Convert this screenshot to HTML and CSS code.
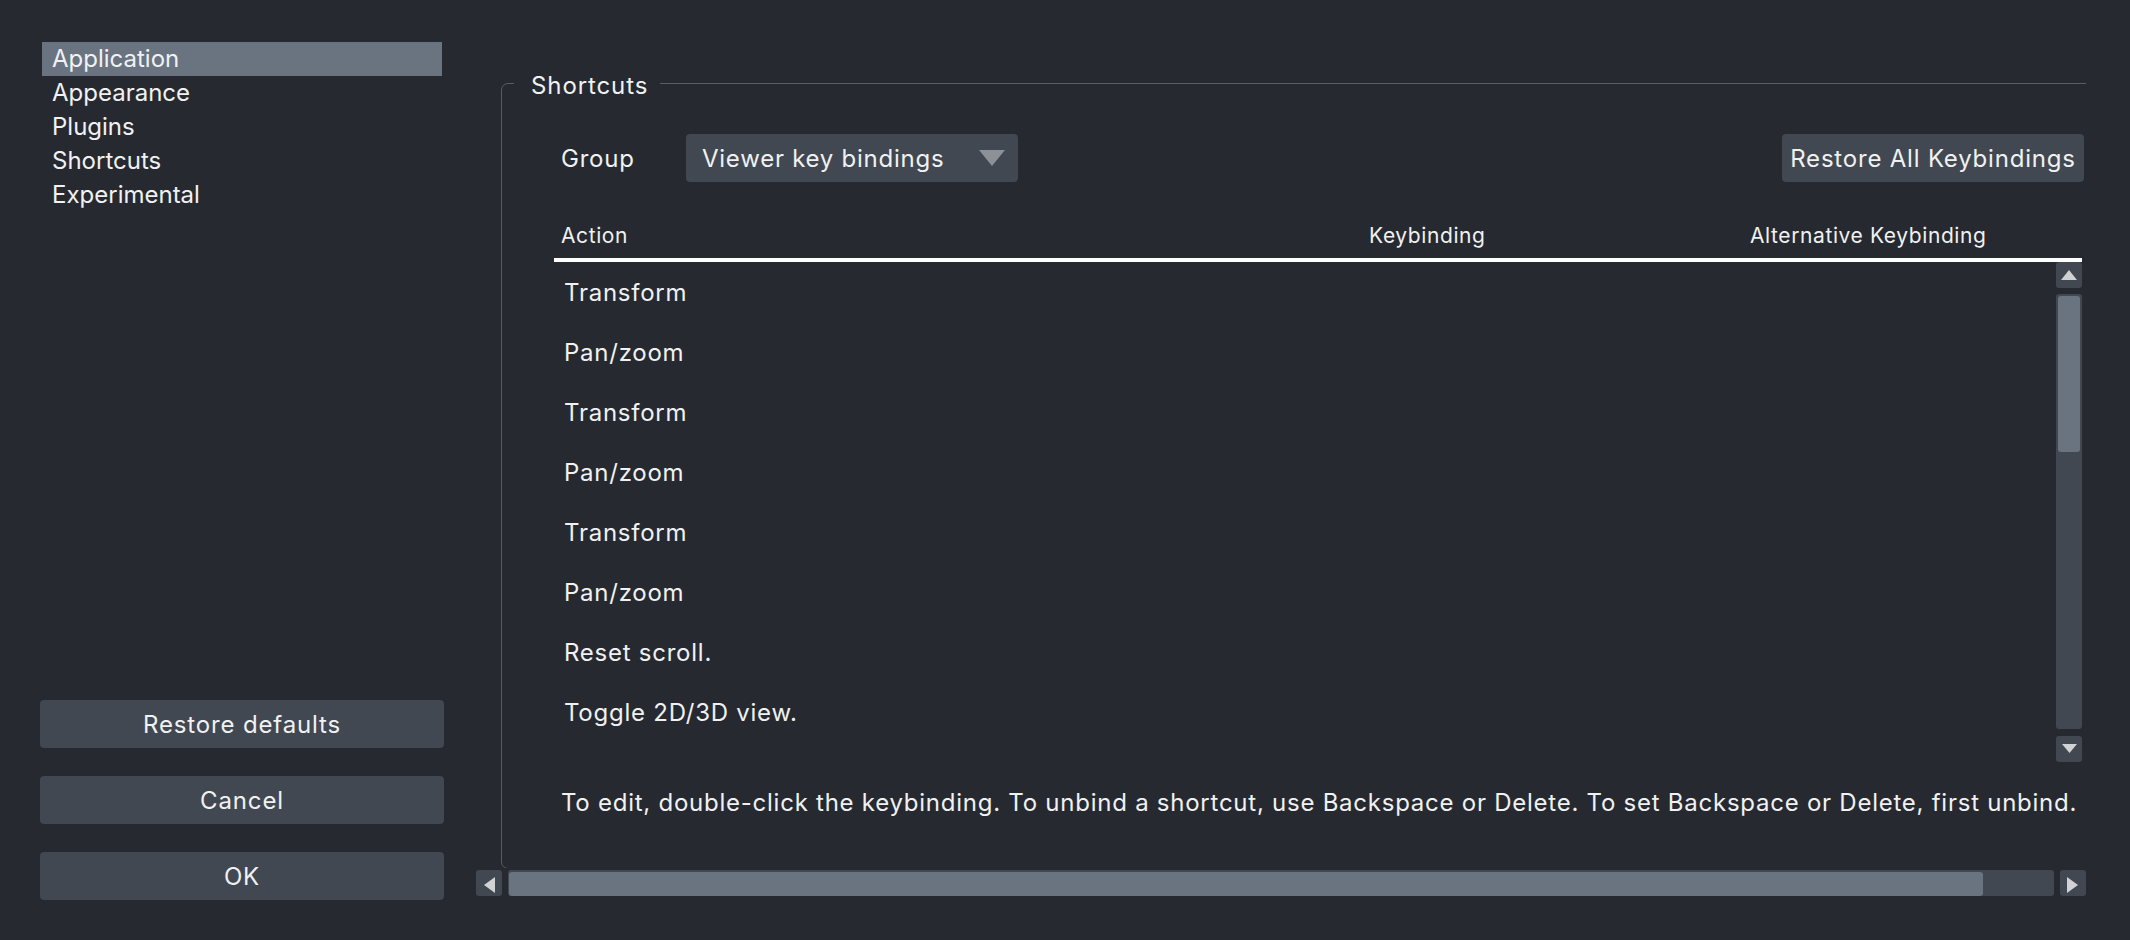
FILE: index.html
```html
<!DOCTYPE html>
<html lang="en">
<head>
<meta charset="utf-8">
<title>Preferences</title>
<link rel="stylesheet" href="styles.css">
</head>
<body>
<div class="window">
  <aside class="sidebar">
    <ul class="nav">
      <li class="nav-item active">Application</li>
      <li class="nav-item">Appearance</li>
      <li class="nav-item">Plugins</li>
      <li class="nav-item">Shortcuts</li>
      <li class="nav-item">Experimental</li>
    </ul>
    <div class="actions">
      <button class="btn">Restore defaults</button>
      <button class="btn">Cancel</button>
      <button class="btn">OK</button>
    </div>
  </aside>

  <main class="main">
    <div class="viewport">
      <fieldset class="group">
        <legend class="group-title">Shortcuts</legend>
        <div class="group-row">
          <span class="group-label">Group</span>
          <div class="combo">
            <span class="combo-text">Viewer key bindings</span>
            <svg class="combo-arrow" width="26" height="16" viewBox="0 0 26 16"><polygon points="0,0 26,0 13,16"/></svg>
          </div>
          <button class="restore-all">Restore All Keybindings</button>
        </div>

        <div class="table">
          <div class="thead">
            <span class="col-action">Action</span>
            <span class="col-key">Keybinding</span>
            <span class="col-alt">Alternative Keybinding</span>
          </div>
          <div class="tbody">
            <div class="rows">
              <div class="row">Transform</div>
              <div class="row">Pan/zoom</div>
              <div class="row">Transform</div>
              <div class="row">Pan/zoom</div>
              <div class="row">Transform</div>
              <div class="row">Pan/zoom</div>
              <div class="row">Reset scroll.</div>
              <div class="row">Toggle 2D/3D view.</div>
              <div class="row">Toggle grid mode.</div>
            </div>
            <div class="vscroll">
              <div class="sbtn"><svg width="26" height="26" viewBox="0 0 26 26"><polygon points="5,18 21,18 13,8"/></svg></div>
              <div class="vtrack"><div class="vhandle"></div></div>
              <div class="sbtn"><svg width="26" height="26" viewBox="0 0 26 26"><polygon points="6,8 21,8 13.5,17"/></svg></div>
            </div>
          </div>
        </div>

        <p class="hint">To edit, double-click the keybinding. To unbind a shortcut, use Backspace or Delete. To set Backspace or Delete, first unbind.</p>
      </fieldset>
    </div>
    <div class="hscroll">
      <div class="sbtn"><svg width="26" height="26" viewBox="0 0 26 26"><polygon points="19,7 19,23 8,15"/></svg></div>
      <div class="htrack"><div class="hhandle"></div></div>
      <div class="sbtn"><svg width="26" height="26" viewBox="0 0 26 26"><polygon points="7,7 7,23 18,15"/></svg></div>
    </div>
  </main>
</div>
</body>
</html>
```

FILE: styles.css
```css
* { box-sizing: border-box; }

html, body {
  margin: 0;
  padding: 0;
  background: #262930;
  color: #f0f1f2;
  font-family: Inter, "Noto Sans", "Liberation Sans", sans-serif;
  font-size: 24px;
}

.window {
  display: flex;
  width: 2130px;
  height: 940px;
  overflow: hidden;
}

/* ---------- sidebar ---------- */
.sidebar {
  width: 444px;
  padding: 42px 0 40px 40px;
  display: flex;
  flex-direction: column;
  justify-content: space-between;
}

.nav {
  list-style: none;
  margin: 0 0 0 2px;
  padding: 0;
  width: 400px;
}

.nav-item {
  height: 34px;
  line-height: 34px;
  padding-left: 10px;
  white-space: nowrap;
}

.nav-item.active {
  background: #6a7380;
}

.actions {
  display: flex;
  flex-direction: column;
  gap: 28px;
}

.btn {
  width: 404px;
  height: 48px;
  border: none;
  border-radius: 4px;
  background: #414851;
  color: #f0f1f2;
  font: inherit;
  letter-spacing: 0.85px;
  padding: 0;
}

/* ---------- main ---------- */
.main {
  margin-left: 32px;
  width: 1610px;
  display: flex;
  flex-direction: column;
  letter-spacing: 0.75px;
}

.viewport {
  height: 868px;
  overflow: hidden;
}

.group {
  margin: 68px 0 0 25px;
  width: 1596px;
  border: 1px solid #575d66;
  border-radius: 7px;
  padding: 36px 12px 50px 52px;
  min-width: 0;
}

.group-title {
  margin-left: -40px;
  padding: 0 12px 0 17px;
  line-height: 35px;
  height: 30px;
  letter-spacing: 0.9px;
}

.group-row {
  display: flex;
  align-items: center;
  height: 48px;
  padding: 1px 0 0 7px;
}

.group-label {
  width: 125px;
  flex: none;
}

.combo {
  width: 332px;
  height: 48px;
  margin-top: -1px;
  background: #414851;
  border-radius: 4px;
  display: flex;
  align-items: center;
  justify-content: space-between;
  padding: 1px 13px 0 16px;
}

.combo-arrow {
  fill: #8d9096;
  display: block;
  margin-top: -1px;
}

.restore-all {
  margin-left: auto;
  margin-top: -1px;
  height: 48px;
  width: 302px;
  border: none;
  border-radius: 4px;
  background: #414851;
  color: #f0f1f2;
  font: inherit;
  letter-spacing: 0.8px;
  padding: 1px 0 0;
  white-space: nowrap;
}

/* ---------- table ---------- */
.table {
  margin-top: 40px;
  width: 1528px;
}

.thead {
  display: grid;
  grid-template-columns: 808px 381px 1fr;
  padding: 1px 0 9px 7px;
  line-height: 26px;
  font-size: 21px;
  letter-spacing: 0.6px;
  border-bottom: 4px solid #ffffff;
}

.tbody {
  display: flex;
  height: 500px;
}

.rows {
  flex: 1;
  height: 499px;
  overflow: hidden;
}

.row {
  height: 60px;
  line-height: 62px;
  padding-left: 10px;
  white-space: nowrap;
}

.vscroll {
  width: 26px;
  flex: none;
  display: flex;
  flex-direction: column;
}

.sbtn {
  width: 26px;
  height: 26px;
  flex: none;
  background: #414851;
  border-radius: 3px;
}

.sbtn svg {
  display: block;
  fill: #d1d2d4;
}

.vtrack {
  flex: 1;
  margin: 6px 0 7px;
  background: #414851;
  border-radius: 3px;
  padding: 2px;
}

.vhandle {
  height: 156px;
  background: #6a7380;
  border-radius: 3px;
}

.hint {
  margin: 26px 0 0 7px;
  line-height: 30px;
  white-space: nowrap;
}

/* ---------- horizontal scrollbar ---------- */
.hscroll {
  margin-top: 2px;
  display: flex;
  height: 26px;
}

.htrack {
  flex: 1;
  margin: 0 6px;
  background: #414851;
  border-radius: 3px;
  padding: 2px 0 0 1px;
}

.hhandle {
  width: 1474px;
  height: 24px;
  background: #6a7380;
  border-radius: 3px;
}
```
